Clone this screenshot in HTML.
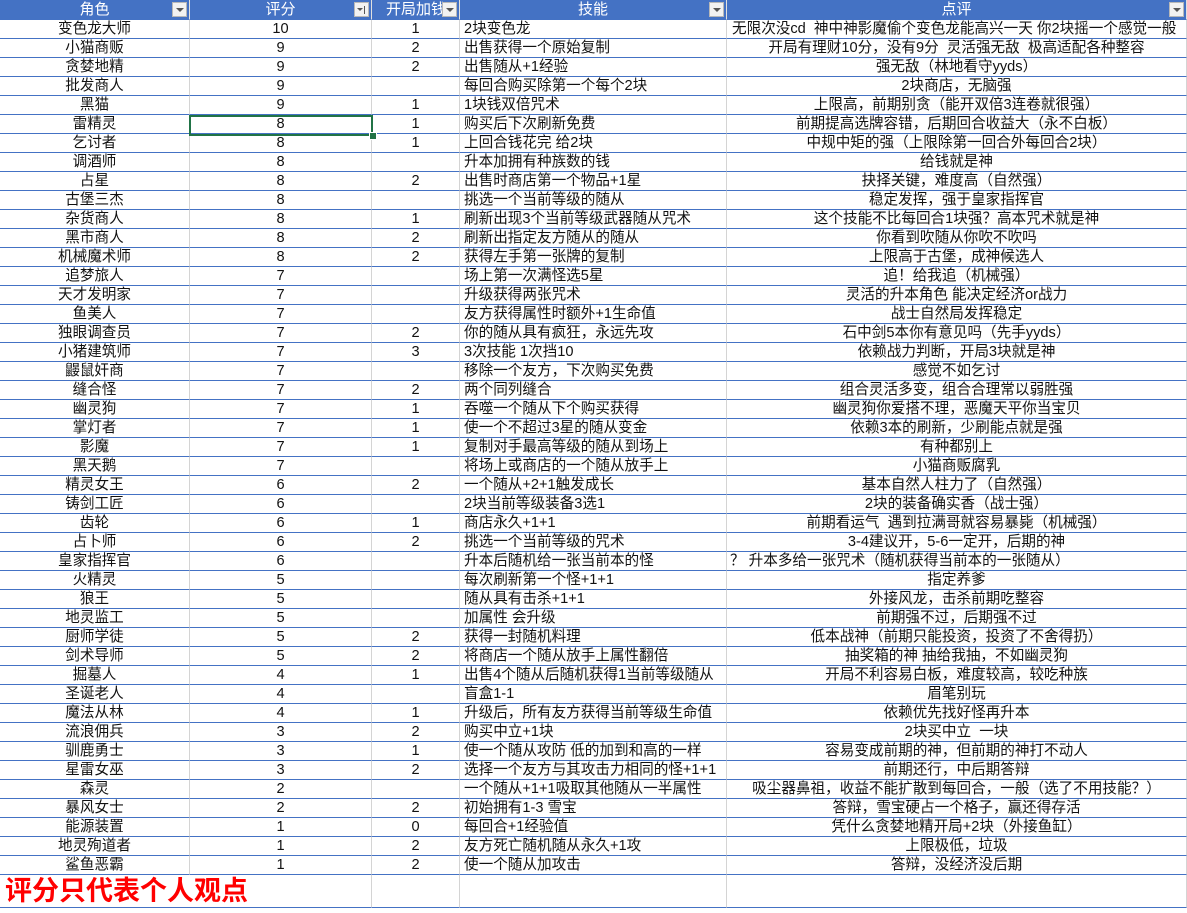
<!DOCTYPE html>
<html><head><meta charset="utf-8">
<style>
html,body{margin:0;padding:0;background:#fff;width:1187px;height:913px;overflow:hidden}
body{font-family:"Liberation Sans","Noto Sans CJK SC",sans-serif;font-size:14.6px;color:#111}
table{position:absolute;left:0;top:0;border-collapse:separate;border-spacing:0;table-layout:fixed;width:1187px}
td{padding:0;height:19px;line-height:18px;box-sizing:border-box;border-right:1px solid #d4d4d4;border-bottom:1px solid #4472c4;white-space:nowrap;overflow:hidden;text-align:center}
td.d{text-align:left;padding-left:4px}
tr.h td{height:20px;background:#4472c4;color:#fff;border-right:1px solid #e0e0e0;border-bottom:1px solid #4472c4;position:relative;font-size:15px}
.btn{position:absolute;top:2px;right:2px;width:15px;height:15px;background:#f2f2f2;border:1px solid #b8b8b8;box-sizing:border-box}
.btn:after{content:"";position:absolute;left:3px;top:5px;border-left:4px solid transparent;border-right:4px solid transparent;border-top:4px solid #555}
.btn.s:after{left:2px;border-left-width:3px;border-right-width:3px;border-top-width:3px}
.btn.s:before{content:"";position:absolute;right:3px;top:3px;width:1px;height:8px;background:#555}
tr.last td{height:33px;border-bottom:1px solid #4472c4}
.sel{position:absolute;left:189px;top:115px;width:184px;height:21px;border:2px solid #217346;box-sizing:border-box}
.selh{position:absolute;left:369px;top:132px;width:6px;height:6px;background:#217346;border:1px solid #fff}
.red{color:#f00;font-weight:bold;font-size:27px;text-align:left;padding-left:5px;line-height:32px}
</style></head><body>
<table>
<colgroup><col style="width:190px"><col style="width:182px"><col style="width:88px"><col style="width:267px"><col style="width:460px"></colgroup>
<tr class="h"><td>角色<span class="btn"></span></td><td>评分<span class="btn s"></span></td><td style="text-align:left;padding-left:14px">开局加钱<span class="btn"></span></td><td>技能<span class="btn"></span></td><td>点评<span class="btn"></span></td></tr>
<tr><td>变色龙大师</td><td>10</td><td>1</td><td class="d">2块变色龙</td><td class="d" style="padding-left:5px">无限次没cd&nbsp; 神中神影魔偷个变色龙能高兴一天 你2块摇一个感觉一般</td></tr>
<tr><td>小猫商贩</td><td>9</td><td>2</td><td class="d">出售获得一个原始复制</td><td>开局有理财10分，没有9分&nbsp; 灵活强无敌&nbsp; 极高适配各种整容</td></tr>
<tr><td>贪婪地精</td><td>9</td><td>2</td><td class="d">出售随从+1经验</td><td>强无敌（林地看守yyds）</td></tr>
<tr><td>批发商人</td><td>9</td><td></td><td class="d">每回合购买除第一个每个2块</td><td>2块商店，无脑强</td></tr>
<tr><td>黑猫</td><td>9</td><td>1</td><td class="d">1块钱双倍咒术</td><td>上限高，前期别贪（能开双倍3连卷就很强）</td></tr>
<tr><td>雷精灵</td><td>8</td><td>1</td><td class="d">购买后下次刷新免费</td><td>前期提高选牌容错，后期回合收益大（永不白板）</td></tr>
<tr><td>乞讨者</td><td>8</td><td>1</td><td class="d">上回合钱花完 给2块</td><td>中规中矩的强（上限除第一回合外每回合2块）</td></tr>
<tr><td>调酒师</td><td>8</td><td></td><td class="d">升本加拥有种族数的钱</td><td>给钱就是神</td></tr>
<tr><td>占星</td><td>8</td><td>2</td><td class="d">出售时商店第一个物品+1星</td><td>抉择关键，难度高（自然强）</td></tr>
<tr><td>古堡三杰</td><td>8</td><td></td><td class="d">挑选一个当前等级的随从</td><td>稳定发挥，强于皇家指挥官</td></tr>
<tr><td>杂货商人</td><td>8</td><td>1</td><td class="d">刷新出现3个当前等级武器随从咒术</td><td>这个技能不比每回合1块强？高本咒术就是神</td></tr>
<tr><td>黑市商人</td><td>8</td><td>2</td><td class="d">刷新出指定友方随从的随从</td><td>你看到吹随从你吹不吹吗</td></tr>
<tr><td>机械魔术师</td><td>8</td><td>2</td><td class="d">获得左手第一张牌的复制</td><td>上限高于古堡，成神候选人</td></tr>
<tr><td>追梦旅人</td><td>7</td><td></td><td class="d">场上第一次满怪选5星</td><td>追！给我追（机械强）</td></tr>
<tr><td>天才发明家</td><td>7</td><td></td><td class="d">升级获得两张咒术</td><td>灵活的升本角色 能决定经济or战力</td></tr>
<tr><td>鱼美人</td><td>7</td><td></td><td class="d">友方获得属性时额外+1生命值</td><td>战士自然局发挥稳定</td></tr>
<tr><td>独眼调查员</td><td>7</td><td>2</td><td class="d">你的随从具有疯狂，永远先攻</td><td>石中剑5本你有意见吗（先手yyds）</td></tr>
<tr><td>小猪建筑师</td><td>7</td><td>3</td><td class="d">3次技能 1次挡10</td><td>依赖战力判断，开局3块就是神</td></tr>
<tr><td>鼹鼠奸商</td><td>7</td><td></td><td class="d">移除一个友方，下次购买免费</td><td>感觉不如乞讨</td></tr>
<tr><td>缝合怪</td><td>7</td><td>2</td><td class="d">两个同列缝合</td><td>组合灵活多变，组合合理常以弱胜强</td></tr>
<tr><td>幽灵狗</td><td>7</td><td>1</td><td class="d">吞噬一个随从下个购买获得</td><td>幽灵狗你爱搭不理，恶魔天平你当宝贝</td></tr>
<tr><td>掌灯者</td><td>7</td><td>1</td><td class="d">使一个不超过3星的随从变金</td><td>依赖3本的刷新，少刷能点就是强</td></tr>
<tr><td>影魔</td><td>7</td><td>1</td><td class="d">复制对手最高等级的随从到场上</td><td>有种都别上</td></tr>
<tr><td>黑天鹅</td><td>7</td><td></td><td class="d">将场上或商店的一个随从放手上</td><td>小猫商贩腐乳</td></tr>
<tr><td>精灵女王</td><td>6</td><td>2</td><td class="d">一个随从+2+1触发成长</td><td>基本自然人柱力了（自然强）</td></tr>
<tr><td>铸剑工匠</td><td>6</td><td></td><td class="d">2块当前等级装备3选1</td><td>2块的装备确实香（战士强）</td></tr>
<tr><td>齿轮</td><td>6</td><td>1</td><td class="d">商店永久+1+1</td><td>前期看运气&nbsp; 遇到拉满哥就容易暴毙（机械强）</td></tr>
<tr><td>占卜师</td><td>6</td><td>2</td><td class="d">挑选一个当前等级的咒术</td><td>3-4建议开，5-6一定开，后期的神</td></tr>
<tr><td>皇家指挥官</td><td>6</td><td></td><td class="d">升本后随机给一张当前本的怪</td><td class="d" style="padding-left:3px">？ 升本多给一张咒术（随机获得当前本的一张随从）</td></tr>
<tr><td>火精灵</td><td>5</td><td></td><td class="d">每次刷新第一个怪+1+1</td><td>指定养爹</td></tr>
<tr><td>狼王</td><td>5</td><td></td><td class="d">随从具有击杀+1+1</td><td>外接风龙，击杀前期吃整容</td></tr>
<tr><td>地灵监工</td><td>5</td><td></td><td class="d">加属性 会升级</td><td>前期强不过，后期强不过</td></tr>
<tr><td>厨师学徒</td><td>5</td><td>2</td><td class="d">获得一封随机料理</td><td>低本战神（前期只能投资，投资了不舍得扔）</td></tr>
<tr><td>剑术导师</td><td>5</td><td>2</td><td class="d">将商店一个随从放手上属性翻倍</td><td>抽奖箱的神 抽给我抽，不如幽灵狗</td></tr>
<tr><td>掘墓人</td><td>4</td><td>1</td><td class="d">出售4个随从后随机获得1当前等级随从</td><td>开局不利容易白板，难度较高，较吃种族</td></tr>
<tr><td>圣诞老人</td><td>4</td><td></td><td class="d">盲盒1-1</td><td>眉笔别玩</td></tr>
<tr><td>魔法从林</td><td>4</td><td>1</td><td class="d">升级后，所有友方获得当前等级生命值</td><td>依赖优先找好怪再升本</td></tr>
<tr><td>流浪佣兵</td><td>3</td><td>2</td><td class="d">购买中立+1块</td><td>2块买中立&nbsp; 一块</td></tr>
<tr><td>驯鹿勇士</td><td>3</td><td>1</td><td class="d">使一个随从攻防 低的加到和高的一样</td><td>容易变成前期的神，但前期的神打不动人</td></tr>
<tr><td>星雷女巫</td><td>3</td><td>2</td><td class="d">选择一个友方与其攻击力相同的怪+1+1</td><td>前期还行，中后期答辩</td></tr>
<tr><td>森灵</td><td>2</td><td></td><td class="d">一个随从+1+1吸取其他随从一半属性</td><td>吸尘器鼻祖，收益不能扩散到每回合，一般（选了不用技能？）</td></tr>
<tr><td>暴风女士</td><td>2</td><td>2</td><td class="d">初始拥有1-3 雪宝</td><td>答辩，雪宝硬占一个格子，赢还得存活</td></tr>
<tr><td>能源装置</td><td>1</td><td>0</td><td class="d">每回合+1经验值</td><td>凭什么贪婪地精开局+2块（外接鱼缸）</td></tr>
<tr><td>地灵殉道者</td><td>1</td><td>2</td><td class="d">友方死亡随机随从永久+1攻</td><td>上限极低，垃圾</td></tr>
<tr><td>鲨鱼恶霸</td><td>1</td><td>2</td><td class="d">使一个随从加攻击</td><td>答辩，没经济没后期</td></tr>
<tr class="last"><td class="red" colspan="2" style="border-right:1px solid #d4d4d4">评分只代表个人观点</td><td></td><td></td><td></td></tr>
</table>
<div class="sel"></div><div class="selh"></div>
</body></html>
